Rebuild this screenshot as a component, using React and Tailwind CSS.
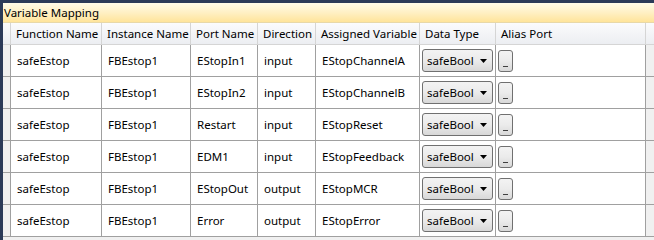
import React from "react";

const cols = [
  { label: "Function Name", w: "w-[91px]" },
  { label: "Instance Name", w: "w-[89px]" },
  { label: "Port Name", w: "w-[67px]" },
  { label: "Direction", w: "w-[58px]" },
  { label: "Assigned Variable", w: "w-[104px]" },
  { label: "Data Type", w: "w-[76px]" },
  { label: "Alias Port", w: "w-[150px]" },
];

const rows = [
  ["safeEstop", "FBEstop1", "EStopIn1", "input", "EStopChannelA"],
  ["safeEstop", "FBEstop1", "EStopIn2", "input", "EStopChannelB"],
  ["safeEstop", "FBEstop1", "Restart", "input", "EStopReset"],
  ["safeEstop", "FBEstop1", "EDM1", "input", "EStopFeedback"],
  ["safeEstop", "FBEstop1", "EStopOut", "output", "EStopMCR"],
  ["safeEstop", "FBEstop1", "Error", "output", "EStopError"],
];

export default function App() {
  return (
    <div
      className="w-[654px] h-[240px] overflow-hidden flex flex-col bg-[#2b3a58] text-[11.5px] text-black"
      style={{ fontFamily: '"Noto Sans", "Open Sans", sans-serif' }}
    >
      <div className="h-[3px] shrink-0" />
      <div className="flex flex-1 min-h-0">
        <div className="w-[3px] shrink-0" />
        <div className="flex-1 flex flex-col bg-[#f0f0f0] min-w-0">
          {/* Title bar */}
          <div className="h-[20px] shrink-0 flex items-center pl-[1px] bg-gradient-to-b from-[#fffbe8] via-[#fff0c4] to-[#ffe49a] border-b border-[#e8d8a8] leading-none">
            Variable Mapping
          </div>
          {/* Header */}
          <div className="h-[22px] shrink-0 flex bg-gradient-to-b from-[#fbfbfc] to-[#eceef2] border-b border-[#d5d5d5]">
            <div className="w-[8px] shrink-0 border-r border-[#d5d5d5]" />
            {cols.map((c) => (
              <div
                key={c.label}
                className={`${c.w} shrink-0 border-r border-[#d5d5d5] flex items-center pl-[5px] whitespace-nowrap overflow-hidden leading-none`}
              >
                {c.label}
              </div>
            ))}
            <div className="flex-1" />
          </div>
          {/* Rows */}
          {rows.map((r, i) => (
            <div key={i} className="h-[32px] shrink-0 flex border-b border-[#a0a0a0]">
              <div className="w-[8px] shrink-0 border-r border-[#a0a0a0] bg-[#f0f0f0]" />
              {r.map((t, j) => (
                <div
                  key={j}
                  className={`${cols[j].w} shrink-0 border-r border-[#a0a0a0] bg-white flex items-center pl-[6px] whitespace-nowrap overflow-hidden leading-none`}
                >
                  {t}
                </div>
              ))}
              <div className="w-[76px] shrink-0 border-r border-[#a0a0a0] bg-white flex items-center pl-[2px]">
                <div className="w-[71px] h-[23px] rounded-[3px] border border-[#707070] bg-gradient-to-b from-[#f3f3f3] via-[#ebebeb] to-[#d8d8d8] flex items-center justify-between pl-[4px] pr-[5px] leading-none">
                  <span>safeBool</span>
                  <svg width="7" height="4" viewBox="0 0 7 4">
                    <path d="M0 0H7L3.5 4Z" fill="#000" />
                  </svg>
                </div>
              </div>
              <div className="w-[150px] shrink-0 border-r border-[#a0a0a0] bg-white flex items-center pl-[2px]">
                <div className="w-[15px] h-[22px] rounded-[3px] border border-[#707070] bg-gradient-to-b from-[#f3f3f3] via-[#ebebeb] to-[#d8d8d8] flex items-end justify-center pb-[4px]">
                  <div className="w-[5px] h-[1px] bg-[#404040]" />
                </div>
              </div>
              <div className="flex-1 bg-[#f0f0f0]" />
            </div>
          ))}
          <div className="flex-1" />
        </div>
      </div>
    </div>
  );
}
